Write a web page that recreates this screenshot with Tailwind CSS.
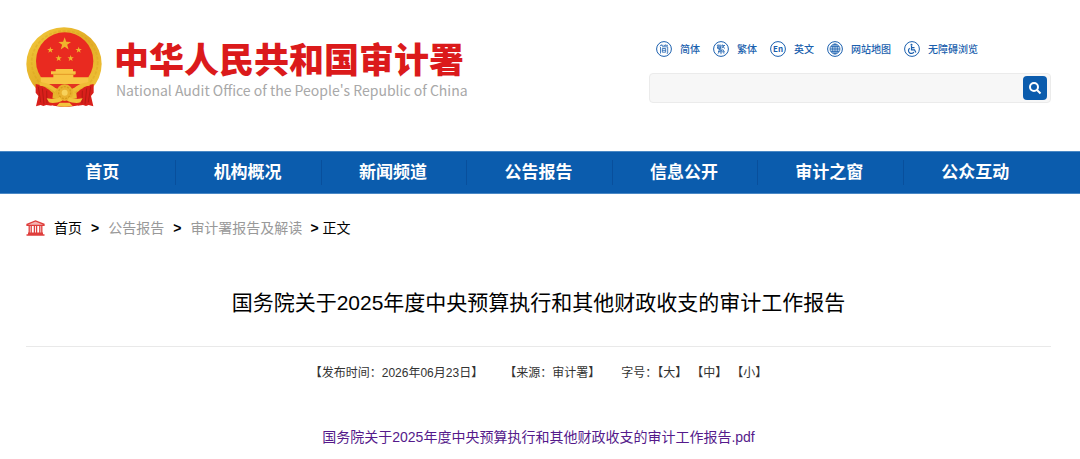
<!DOCTYPE html>
<html lang="zh-CN">
<head>
<meta charset="utf-8">
<meta name="viewport" content="width=device-width, initial-scale=1">
<title>国务院关于2025年度中央预算执行和其他财政收支的审计工作报告</title>
<script src="https://cdn.jsdelivr.net/npm/@tailwindcss/browser@4"></script>
</head>
<body class="bg-white text-black font-['Liberation_Sans','Noto_Sans_CJK_SC',sans-serif]">
<header class="flex items-start justify-between pl-[26px] pr-[29px] pt-[26px] pb-[43px]">
  <a href="#" class="flex items-start gap-3">
    <svg class="w-[76px] h-[82px] shrink-0" viewBox="31 34 228 242" role="img" aria-label="国徽">
      <defs>
        <linearGradient id="gold" x1="0" y1="0" x2="1" y2="1"><stop offset="0" stop-color="#f3cb3c"/><stop offset=".5" stop-color="#e2ac25"/><stop offset="1" stop-color="#f4ca3e"/></linearGradient>
        <path id="star" d="M0-10 2.4-3.2 9.5-3.1 3.8 1.2 5.9 8.1 0 4-5.9 8.1-3.8 1.2-9.5-3.1-2.4-3.2Z"/>
      </defs>
      <ellipse cx="145" cy="146" rx="113" ry="110" fill="url(#gold)"/>
      <ellipse cx="147" cy="141" rx="99" ry="94" fill="none" stroke="#d79d1c" stroke-width="5" stroke-dasharray="9 5" opacity=".35"/>
      <circle cx="147" cy="137" r="86" fill="#e92a20"/>
      <g fill="#f0b52c">
        <use href="#star" transform="translate(147 86) scale(2)"/>
        <use href="#star" transform="translate(104 104)"/>
        <use href="#star" transform="translate(189 104)"/>
        <use href="#star" transform="translate(129 129)"/>
        <use href="#star" transform="translate(165 129)"/>
      </g>
      <path d="M120 161h52v7h8v9h-7v9h45v14l-9 6H87l-12-6v-14h38v-9h-7v-9h14z" fill="#f8c544"/>
      <path d="M112 177h66" stroke="#e39a26" stroke-width="3"/>
      <path d="M84 206h126l-26 12h-74z" fill="#e33321"/>
      <path d="M60 206c20 2 36 14 52 27l-4 38-16-2-9 3-8-3-14 4 7-31-8-10z" fill="#d91f1b"/>
      <path d="M234 206c-20 2-36 14-52 27l4 38 16-2 9 3 8-3 14 4-7-31 8-10z" fill="#d91f1b"/>
      <path d="M68 214l7 47M80 219l5 48M93 226l1 38M225 214l-7 47M213 219l-5 48M200 226l-1 38" stroke="#b51a13" stroke-width="3" fill="none"/>
      <path d="M96 244c12 10 85 10 102 0l-6 24c-24 8-64 8-88 0z" fill="#df2419"/>
      <path d="M72 206c20 0 34 6 48 20M222 206c-20 0-34 6-48 20" stroke="#f0bd36" stroke-width="11" fill="none"/>
      <circle cx="147" cy="232" r="25" fill="#e9b12e"/>
      <circle cx="147" cy="232" r="18" fill="none" stroke="#d79d1c" stroke-width="4" stroke-dasharray="6 4"/>
      <circle cx="147" cy="232" r="9" fill="#f7d25b"/>
      <path d="M93 249c16 2 30 4 39-4l8 11c-14 6-29 9-40 5zM201 249c-16 2-30 4-39-4l-8 11c14 6 29 9 40 5zM123 272l9-10h30l9 10c-16 3-32 3-48 0z" fill="#f2c43d"/>
    </svg>
    <span class="flex flex-col pt-3 whitespace-nowrap">
      <span class="font-['Noto_Sans_CJK_SC',sans-serif] font-black text-[35px] leading-10 text-[#db1a1b]">中华人民共和国审计署</span>
      <span class="font-['Noto_Sans_CJK_SC',sans-serif] text-sm leading-6 pl-0.5 text-[#a8a8a8]">National Audit Office of the People's Republic of China</span>
    </span>
  </a>
  <div class="w-[402px] pt-[15px]">
    <nav aria-label="工具" class="flex gap-[13px] pl-[7px] text-[10px] leading-4 text-[#1a5fae] whitespace-nowrap font-['Noto_Sans_CJK_SC',sans-serif] font-medium">
      <a href="#" class="flex gap-2"><svg class="size-4" viewBox="0 0 16 16" fill="none" stroke="currentColor" stroke-width="1" aria-hidden="true"><circle cx="8" cy="8" r="7.4"/><path stroke-width=".8" d="M5.3 3.5 4 5.3M5 4.3h2.5M9.3 3.5 8 5.3M9 4.3h3M4.5 6v6.5M6 5.8h5.7v6.5h-1M6.3 7.5h3.4v3.7H6.3zM6.3 9.3h3.4"/></svg>简体</a>
      <a href="#" class="flex gap-2"><svg class="size-4" viewBox="0 0 16 16" fill="none" stroke="currentColor" stroke-width="1" aria-hidden="true"><circle cx="8" cy="8" r="7.4"/><path stroke-width=".8" d="M5 3.5 4 5M4.8 4.2h3.5M4.8 5.2h3l-.3 2.3H4.6zM4 6.3h4.4M9.5 3.5l-1 1.8M9.3 4.5H12M11.3 4.5 8.7 7.5M9.3 5.3l2.7 2.2M8 7.8 5.5 9h4L5 10.8h6.3M10 8.5l1.5 2.8M8 10.5v2.7M6 11.5l-1.3 1M10 11.5l1.3 1"/></svg>繁体</a>
      <a href="#" class="flex gap-2"><svg class="size-4" viewBox="0 0 16 16" aria-hidden="true"><circle cx="8" cy="8" r="7.4" fill="none" stroke="currentColor"/><text x="8" y="11" text-anchor="middle" font-size="8" font-weight="700" fill="currentColor">En</text></svg>英文</a>
      <a href="#" class="flex gap-2"><svg class="size-4" viewBox="0 0 16 16" fill="none" stroke="currentColor" stroke-width="1" aria-hidden="true"><circle cx="8" cy="8" r="7.4"/><g stroke-width=".7"><circle cx="8" cy="8" r="5" fill="#b7cfe9"/><ellipse cx="8" cy="8" rx="2.4" ry="5"/><path d="M8 3v10M3 8h10M4 5.5h8M4 10.5h8"/></g></svg>网站地图</a>
      <a href="#" class="flex gap-2"><svg class="size-4" viewBox="0 0 16 16" fill="none" stroke="currentColor" stroke-width="1" aria-hidden="true"><circle cx="8" cy="8" r="7.4"/><circle cx="7.5" cy="3.7" r="1" fill="currentColor" stroke="none"/><path stroke-width="1.2" d="M7.5 4.8v4h3l1.4 2.7M7.5 6.6h3M5.7 7.2a2.9 2.9 0 1 0 4.2 3.8"/></svg>无障碍浏览</a>
    </nav>
    <form role="search" class="mt-4 flex items-center rounded border border-[#ebebeb] bg-[#f7f7f7] px-[3px] py-0.5">
      <input type="search" aria-label="搜索" class="min-w-0 flex-1 bg-transparent px-2 text-sm outline-none">
      <button type="button" aria-label="搜索" class="flex size-6 items-center justify-center rounded bg-[#0b5cad] text-white"><svg class="size-3.5" viewBox="0 0 14 14" fill="none" stroke="currentColor" stroke-width="2" aria-hidden="true"><circle cx="6" cy="6" r="4"/><path d="m9 9 3.5 3.5"/></svg></button>
    </form>
  </div>
</header>
<nav aria-label="主导航" class="bg-[#0b5cad] px-[31px] text-[17px] font-bold text-white border-y border-[#4a88c5]">
  <ul class="grid grid-cols-7 divide-x divide-[#084f9c] py-2 text-center leading-[25px] *:pr-0.5">
    <li><a href="#">首页</a></li><li><a href="#">机构概况</a></li><li><a href="#">新闻频道</a></li><li><a href="#">公告报告</a></li><li><a href="#">信息公开</a></li><li><a href="#">审计之窗</a></li><li><a href="#">公众互动</a></li>
  </ul>
</nav>
<main class="pl-[26px] pr-[29px]">
  <nav aria-label="面包屑" class="flex items-center pt-[22px] text-sm leading-6 whitespace-nowrap">
    <svg class="mr-[9px] h-4 w-[19px]" viewBox="0 0 19 16" fill="none" stroke="#df3e3c" stroke-width="1.3" aria-hidden="true"><path fill="#f3b5b3" d="M1 4.3 9.5.9 18 4.3v1H1z"/><path d="M3.2 5.5v8M5.2 5.5v8M8.4 5.5v8M10.6 5.5v8M13.8 5.5v8M15.8 5.5v8"/><path stroke-width="1.6" d="M.5 15h18M2 13.4h15"/></svg>
    <a href="#">首页</a><span class="mx-[9px] font-bold">&gt;</span><a href="#" class="text-[#999]">公告报告</a><span class="mx-[9px] font-bold">&gt;</span><a href="#" class="text-[#999]">审计署报告及解读</a><span class="ml-2 mr-1 font-bold">&gt;</span><span>正文</span>
  </nav>
  <h1 class="pt-[47px] text-center text-[21px] leading-8">国务院关于2025年度中央预算执行和其他财政收支的审计工作报告</h1>
  <div class="mt-[27px] flex justify-center border-t border-[#e9e9e9] pt-4 text-xs leading-5 text-[#333] whitespace-nowrap">
    <span>【发布时间：2026年06月23日】</span>
    <span class="ml-[21px]">【来源：审计署】</span>
    <span class="ml-[21px]">字号：</span>
    <span class="flex gap-1"><button type="button" class="[text-spacing-trim:trim-start]">【大】</button><button type="button">【中】</button><button type="button">【小】</button></span>
  </div>
  <p class="pt-[42px] text-center text-sm leading-6"><a href="#" class="text-[#551a8b]">国务院关于2025年度中央预算执行和其他财政收支的审计工作报告.pdf</a></p>
</main>
</body>
</html>
